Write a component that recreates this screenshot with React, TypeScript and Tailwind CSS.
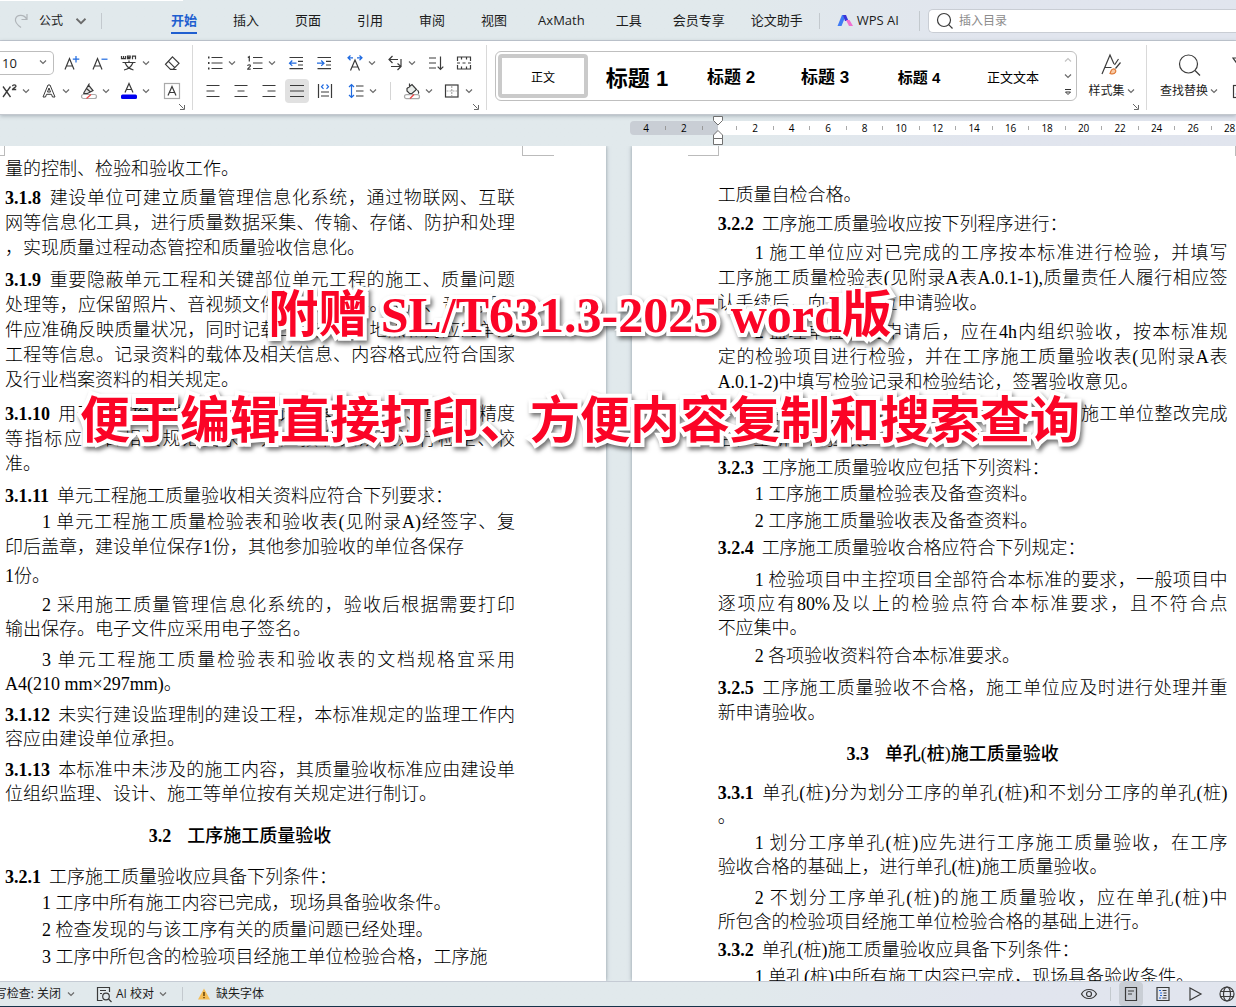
import type { ReactNode } from "react";
import clsx from "clsx";

type Para = {
  gap: string;
  lines: string[];
  no?: string;
  indent?: boolean;
  tight?: boolean;
  heading?: boolean;
};

const leftPage: Para[] = [
  { gap: "mt-px", lines: ["量的控制、检验和验收工作。"] },
  {
    gap: "mt-1",
    no: "3.1.8",
    lines: [
      "建设单位可建立质量管理信息化系统，通过物联网、互联",
      "网等信息化工具，进行质量数据采集、传输、存储、防护和处理",
      "，实现质量过程动态管控和质量验收信息化。",
    ],
  },
  {
    gap: "mt-[7px]",
    no: "3.1.9",
    lines: [
      "重要隐蔽单元工程和关键部位单元工程的施工、质量问题",
      "处理等，应保留照片、音视频文件或相关资料。照片、音视频文",
      "件应准确反映质量状况，同时记载工程部位、地点和对应的单元",
      "工程等信息。记录资料的载体及相关信息、内容格式应符合国家",
      "及行业档案资料的相关规定。",
    ],
  },
  {
    gap: "mt-[9px]",
    no: "3.1.10",
    lines: [
      "用于质量检验的仪器设备、计量器具的性能、量程、精度",
      "等指标应符合相关规范要求，并应按有关规定进行检定、校",
      "准。",
    ],
  },
  { gap: "mt-[7px]", no: "3.1.11", lines: ["单元工程施工质量验收相关资料应符合下列要求："] },
  { gap: "mt-px", indent: true, lines: ["1 单元工程施工质量检验表和验收表(见附录A)经签字、复", ""] },
  { gap: "mt-0", lines: ["印后盖章，建设单位保存1份，其他参加验收的单位各保存"] },
  { gap: "mt-1", lines: ["1份。"] },
  {
    gap: "mt-1",
    indent: true,
    tight: true,
    lines: ["2 采用施工质量管理信息化系统的，验收后根据需要打印", "输出保存。电子文件应采用电子签名。"],
  },
  {
    gap: "mt-[7px]",
    indent: true,
    tight: true,
    lines: ["3 单元工程施工质量检验表和验收表的文档规格宜采用", "A4(210 mm×297mm)。"],
  },
  {
    gap: "mt-[7px]",
    no: "3.1.12",
    tight: true,
    lines: ["未实行建设监理制的建设工程，本标准规定的监理工作内", "容应由建设单位承担。"],
  },
  {
    gap: "mt-[7px]",
    no: "3.1.13",
    tight: true,
    lines: ["本标准中未涉及的施工内容，其质量验收标准应由建设单", "位组织监理、设计、施工等单位按有关规定进行制订。"],
  },
  { gap: "mt-[18px]", no: "3.2", heading: true, lines: ["工序施工质量验收"] },
  { gap: "mt-[16px]", no: "3.2.1", lines: ["工序施工质量验收应具备下列条件："] },
  { gap: "mt-px", indent: true, lines: ["1 工序中所有施工内容已完成，现场具备验收条件。"] },
  { gap: "mt-[2px]", indent: true, lines: ["2 检查发现的与该工序有关的质量问题已经处理。"] },
  { gap: "mt-[2px]", indent: true, lines: ["3 工序中所包含的检验项目经施工单位检验合格，工序施"] },
];

const rightPage: Para[] = [
  { gap: "mt-[27px]", lines: ["工质量自检合格。"] },
  { gap: "mt-1", no: "3.2.2", lines: ["工序施工质量验收应按下列程序进行："] },
  {
    gap: "mt-1",
    indent: true,
    lines: [
      "1 施工单位应对已完成的工序按本标准进行检验，并填写",
      "工序施工质量检验表(见附录A表A.0.1-1),质量责任人履行相应签",
      "认手续后，向监理单位申请验收。",
    ],
  },
  {
    gap: "mt-1",
    indent: true,
    lines: [
      "2 监理单位收到申请后，应在4h内组织验收，按本标准规",
      "定的检验项目进行检验，并在工序施工质量验收表(见附录A表",
      "A.0.1-2)中填写检验记录和检验结论，签署验收意见。",
    ],
  },
  {
    gap: "mt-[7px]",
    indent: true,
    lines: ["3 经检验不合格的工序，监理单位应要求施工单位整改完成", "后，重新申请验收。"],
  },
  { gap: "mt-1", no: "3.2.3", lines: ["工序施工质量验收应包括下列资料："] },
  { gap: "mt-px", indent: true, lines: ["1 工序施工质量检验表及备查资料。"] },
  { gap: "mt-[2px]", indent: true, lines: ["2 工序施工质量验收表及备查资料。"] },
  { gap: "mt-[2px]", no: "3.2.4", lines: ["工序施工质量验收合格应符合下列规定："] },
  {
    gap: "mt-[7px]",
    indent: true,
    tight: true,
    lines: [
      "1 检验项目中主控项目全部符合本标准的要求，一般项目中",
      "逐项应有80%及以上的检验点符合本标准要求，且不符合点",
      "不应集中。",
    ],
  },
  { gap: "mt-1", indent: true, lines: ["2 各项验收资料符合本标准要求。"] },
  { gap: "mt-[7px]", no: "3.2.5", lines: ["工序施工质量验收不合格，施工单位应及时进行处理并重", "新申请验收。"] },
  { gap: "mt-[16px]", no: "3.3", heading: true, lines: ["单孔(桩)施工质量验收"] },
  { gap: "mt-[14px]", no: "3.3.1", tight: true, lines: ["单孔(桩)分为划分工序的单孔(桩)和不划分工序的单孔(桩)", "。"] },
  {
    gap: "mt-[2px]",
    indent: true,
    tight: true,
    lines: ["1 划分工序单孔(桩)应先进行工序施工质量验收，在工序", "验收合格的基础上，进行单孔(桩)施工质量验收。"],
  },
  {
    gap: "mt-[7px]",
    indent: true,
    tight: true,
    lines: ["2 不划分工序单孔(桩)的施工质量验收，应在单孔(桩)中", "所包含的检验项目经施工单位检验合格的基础上进行。"],
  },
  { gap: "mt-1", no: "3.3.2", lines: ["单孔(桩)施工质量验收应具备下列条件："] },
  { gap: "mt-[2px]", indent: true, lines: ["1 单孔(桩)中所有施工内容已完成，现场具备验收条件。"] },
];

function DocText({ paras }: { paras: Para[] }) {
  return (
    <div className="w-[510px] whitespace-nowrap text-lg font-light text-black">
      {paras.map((p, i) => {
        const leading = p.tight ? "leading-6" : "leading-[25px]";
        if (p.heading) {
          return (
            <h2 key={i} className={clsx("pr-10 text-center font-bold", leading, p.gap)}>
              <span className="mr-4">{p.no}</span>
              <span className="font-medium">{p.lines[0]}</span>
            </h2>
          );
        }
        const rows = p.lines.filter(Boolean);
        return (
          <p key={i} className={clsx(leading, p.gap)}>
            {rows.map((line, j) => (
              <span
                key={j}
                className={clsx(
                  "block",
                  j < p.lines.length - 1 && "[text-align-last:justify]",
                  j === 0 && p.indent && "pl-[37px]",
                )}
              >
                {j === 0 && p.no && <b className="mr-2 font-bold">{p.no}</b>}
                {line}
              </span>
            ))}
          </p>
        );
      })}
    </div>
  );
}

function Svg({ children, size = 18 }: { children: ReactNode; size?: number }) {
  return (
    <svg
      width={size}
      height={size}
      viewBox="0 0 18 18"
      fill="none"
      stroke="#3a3a3a"
      strokeWidth="1.2"
      className="shrink-0"
      aria-hidden="true"
    >
      {children}
    </svg>
  );
}

function Chevron({ size = 8 }: { size?: number }) {
  return (
    <svg width={size} height={size} viewBox="0 0 8 8" fill="none" stroke="#6b6b6b" strokeWidth="1.2" className="shrink-0" aria-hidden="true">
      <path d="M1 2.5 4 5.5 7 2.5" />
    </svg>
  );
}

function Launcher() {
  return (
    <button aria-label="更多设置" className="absolute right-[6px] bottom-[3px]">
      <svg width="8" height="8" viewBox="0 0 8 8" fill="none" stroke="#666" aria-hidden="true">
        <path d="M1 1 5.5 5.5M6.5 2v4.5H2" />
      </svg>
    </button>
  );
}

function Tool({ label, w = "w-7", drop, active, children }: { label: string; w?: string; drop?: boolean; active?: boolean; children: ReactNode }) {
  return (
    <button
      aria-label={label}
      title={label}
      className={clsx("flex h-6 shrink-0 items-center", w, drop ? "gap-1" : "justify-center")}
    >
      {active ? (
        <span className="grid size-6 place-items-center rounded bg-[#e1e1e1]">{children}</span>
      ) : (
        children
      )}
      {drop && <Chevron />}
    </button>
  );
}

const blue = "#1f6ae0";

function FontGroup() {
  return (
    <section aria-label="字体" className="relative flex w-[192px] shrink-0 flex-col justify-center gap-1 pb-[2px]">
      <div className="flex items-center">
        <div className="relative">
          <select
            aria-label="字号"
            defaultValue="10"
            className="h-6 w-[54px] appearance-none rounded-r-[5px] border border-l-0 border-[#bdbdbd] bg-white pl-[2px] text-[13px] leading-5"
          >
            <option>10</option>
            <option>12</option>
          </select>
          <span className="pointer-events-none absolute top-2 right-[7px]">
            <Chevron />
          </span>
        </div>
        <div className="ml-1 flex">
          <Tool label="增大字号">
            <Svg>
              <path d="M2 15.5 6.5 4.5 11 15.5M3.5 12h6" />
              <path d="M13 2v6.500M9.800 5.200h6.500" stroke={blue} />
            </Svg>
          </Tool>
          <Tool label="减小字号">
            <Svg>
              <path d="M2 15.500 6.500 4.500 11 15.500M3.500 12h6" />
              <path d="M10.500 5.200h6" stroke={blue} />
            </Svg>
          </Tool>
        </div>
        <div className="ml-[6px] flex">
          <Tool label="拼音指南" w="w-10" drop>
            <Svg>
              <path d="M1.500 2v2.700h4V2M3.500 2v2.500M10.500 4.700H7.500V2.200h2.700v1.300H7.500M12.500 5.200v-3h3v3" />
              <path d="M2.500 8.500h13M9 6.500v2M5 8.500c1.500 4 4.500 6.500 8.500 7.500M13 8.500c-1.500 4-4.500 6.500-9 7.500" />
            </Svg>
          </Tool>
          <Tool label="清除格式" w="w-6">
            <Svg>
              <path d="M9.500 2.800 16 9.300 10 15.300H7.500L2.500 10.300zM5.500 7.300l6 6M7 15.500h6.500" />
            </Svg>
          </Tool>
        </div>
      </div>
      <div className="flex items-center">
        <Tool label="上标" w="w-10" drop>
          <Svg>
            <path d="M3 4.500 10.500 15M10.500 4.500 3 15M12.500 4.300c0-2 3.500-2 3.500 0 0 1.200-3.500 2-3.500 3.200h3.700" strokeWidth="1.300" />
          </Svg>
        </Tool>
        <Tool label="文字效果" w="w-10" drop>
          <Svg>
            <path d="M3 15 8 3h2l5 12h-2.500l-1-2.700h-5L5.500 15zM7.500 10h3L9 6z" strokeWidth="1" />
          </Svg>
        </Tool>
        <Tool label="突出显示" w="w-10" drop>
          <Svg>
            <path d="M4 10.500 8.500 3 13 8.500 7.500 11.500H3.800zM8.500 3l1-1.500M6.500 6.500l4 3.500" fill="#e4e4e4" />
            <rect x="1.500" y="12.500" width="15" height="4" rx="2" stroke="#aaa" fill="#fff" />
            <path d="m6.500 16.500 4.500-4" stroke="#e44" />
          </Svg>
        </Tool>
        <Tool label="字体颜色" w="w-10" drop>
          <Svg>
            <path d="M5 10.500 9 1.500l4 9M6.300 7.500h5.400" />
            <rect x="1" y="12.500" width="16" height="4.500" rx="1.500" fill="#0000f0" stroke="none" />
          </Svg>
        </Tool>
        <Tool label="字符底纹" w="w-6">
          <Svg>
            <rect x="1.500" y="1.500" width="15" height="15" stroke="#aaa" />
            <path d="M5 13.500 9 4.500l4 9M6.300 10.500h5.400" />
          </Svg>
        </Tool>
      </div>
      <Launcher />
    </section>
  );
}

function ParagraphGroup() {
  return (
    <section aria-label="段落" className="relative flex w-[293px] shrink-0 flex-col justify-center gap-1 pb-[2px]">
      <div className="flex items-center pl-[13px]">
        <Tool label="项目符号" w="w-10" drop>
          <Svg>
            <path d="M5.500 3.500h11M5.500 9h11M5.500 14.500h11" />
            <path d="M2 3.500h1.500M2 9h1.500M2 14.500h1.500" strokeWidth="2" />
          </Svg>
        </Tool>
        <Tool label="编号" w="w-9" drop>
          <Svg>
            <path d="M7 3.500h9.500M7 9h9.500M7 14.500h9.500M1.800 3.500 3.300 2.500v5M1.700 12c0-1.700 2.700-1.700 2.700 0 0 1-2.700 1.900-2.700 3.200h3" />
          </Svg>
        </Tool>
        <Tool label="减少缩进">
          <Svg>
            <path d="M2.500 3.500h13.500M11 7.300h5M11 11h5M2.500 14.700h13.500" />
            <path d="M9.500 9.200H2.500M5.300 6.500 2.500 9.200l2.800 2.700" stroke={blue} />
          </Svg>
        </Tool>
        <Tool label="增加缩进">
          <Svg>
            <path d="M2.500 3.500h13.500M11 7.300h5M11 11h5M2.500 14.700h13.500" />
            <path d="M2 9.200h7M6.200 6.500 9 9.200l-2.800 2.700" stroke={blue} />
          </Svg>
        </Tool>
        <div className="ml-2 flex">
          <Tool label="字符缩放" w="w-10" drop>
            <Svg>
              <path d="M4.500 16.500 9 6l4.500 10.500M6 13h6" />
              <path d="M2 3.800h5M4.500 1.500 2 3.800 4.500 6.200M11 3.800h5M13.500 1.500 16 3.800l-2.500 2.400" stroke={blue} />
            </Svg>
          </Tool>
          <Tool label="换行标记" w="w-9" drop>
            <Svg>
              <path d="M6.500 2 3 5.500 6.500 9M3 5.500h9M15 5v7.500H5M11.500 9.500 15 12.500l-3.500 3.500" />
            </Svg>
          </Tool>
          <Tool label="排序">
            <Svg>
              <path d="M2 4h7M2 9h7M2 14h7M13.500 2.500v13M10.700 12.700l2.800 2.800 2.800-2.800" />
            </Svg>
          </Tool>
          <Tool label="显示标记">
            <Svg>
              <path d="M2.500 7V3h13v4M2.500 11v4h13v-4M2 9h3M7.500 9h3M13 9h3M6.500 3v2.500M11.500 3v2.500M6.500 15v-2.500M11.500 15v-2.500" />
            </Svg>
          </Tool>
        </div>
      </div>
      <div className="flex items-center pl-[6px]">
        <Tool label="左对齐">
          <Svg><path d="M2.500 3.500h13M2.500 9h8M2.500 14.500h13" /></Svg>
        </Tool>
        <Tool label="居中对齐">
          <Svg><path d="M2.500 3.500h13M5.500 9h7M2.500 14.500h13" /></Svg>
        </Tool>
        <Tool label="右对齐">
          <Svg><path d="M2.500 3.500h13M7.500 9h8M2.500 14.500h13" /></Svg>
        </Tool>
        <Tool label="两端对齐" active>
          <Svg><path d="M2 3.500h14M2 9h14M2 14.500h14" /></Svg>
        </Tool>
        <Tool label="分散对齐">
          <Svg>
            <path d="M2.500 2v14M15.500 2v14M5 10h8M5 14h8" />
            <path d="M7.500 2.500 5.500 4.700l2 2.200M10.500 2.500l2 2.200-2 2.200" stroke={blue} />
          </Svg>
        </Tool>
        <div className="ml-2 flex items-center">
          <Tool label="行距" w="w-9" drop>
            <Svg>
              <path d="M9 4h7.500M9 9h7.500M9 14h7.500" />
              <path d="M4.500 2.500v13M2 5l2.500-2.500L7 5M2 13l2.500 2.500L7 13" stroke={blue} />
            </Svg>
          </Tool>
          <span className="mr-3 ml-[7px] h-[18px] w-px bg-[#d5d5d5]" />
          <Tool label="底纹颜色" w="w-10" drop>
            <Svg>
              <path d="M4 6.500 9 2.500l4.500 5L9 11.500H6.500L4 9zM6.500 1.500v4" fill="#e8ece9" />
              <path d="M14.500 8c1.500 2 1.500 3 .500 3.500" />
              <rect x="1.500" y="12.700" width="15" height="4" rx="2" stroke="#aaa" fill="#fff" />
              <path d="m7 16.500 4-4" stroke="#e44" />
            </Svg>
          </Tool>
          <Tool label="边框" w="w-8" drop>
            <Svg>
              <rect x="2.500" y="3" width="12.500" height="12" />
              <path d="M8.750 4v10M3.500 9h10.500" stroke="#aaa" strokeDasharray="2 1" />
            </Svg>
          </Tool>
        </div>
      </div>
      <Launcher />
    </section>
  );
}

const styles = [
  { name: "正文", cls: "text-xs" },
  { name: "标题 1", cls: "text-[22px] font-bold" },
  { name: "标题 2", cls: "text-[17px] font-bold" },
  { name: "标题 3", cls: "text-[17px] font-bold" },
  { name: "标题 4", cls: "text-[15px] font-bold" },
  { name: "正文文本", cls: "text-[13px]" },
];

function StyleGallery() {
  return (
    <div className="mt-[10px] ml-2 flex h-[50px] shrink-0 self-start rounded-md border border-[#bfbfbf] bg-white font-['Liberation_Sans','Noto_Sans_CJK_SC',sans-serif]">
      {styles.map((s, i) => (
        <button
          key={s.name}
          className={clsx(
            "m-[2px] w-[90px] rounded pt-1 whitespace-nowrap text-black",
            i === 0 && "border-4 border-[#cacaca]",
            s.cls,
          )}
        >
          {s.name}
        </button>
      ))}
      <div className="flex w-4 flex-col items-center justify-around">
        <button aria-label="向上" className="rotate-180 opacity-40"><Chevron /></button>
        <button aria-label="向下"><Chevron /></button>
        <button aria-label="展开样式">
          <svg width="8" height="8" viewBox="0 0 8 8" fill="none" stroke="#333" aria-hidden="true">
            <path d="M1 1.500h6M1.500 4 4 6.500 6.500 4z" />
          </svg>
        </button>
      </div>
    </div>
  );
}

function Divider() {
  return <span className="my-1 w-px shrink-0 bg-[#d9d9d9]" />;
}

function BigTool({ label, children }: { label: string; children: ReactNode }) {
  return (
    <button className="flex flex-col items-center justify-center gap-[6px] pb-1 text-xs whitespace-nowrap">
      {children}
      <span className="flex items-center gap-[2px]">
        {label}
        <Chevron />
      </span>
    </button>
  );
}

function Ribbon() {
  return (
    <div className="relative z-10 flex h-[74px] shrink-0 overflow-hidden border-b border-[#c3c8ce] bg-white shadow-[0_1px_4px_rgba(60,75,90,0.35)]">
      <FontGroup />
      <Divider />
      <ParagraphGroup />
      <Divider />
      <StyleGallery />
      <div className="relative flex w-[69px] shrink-0 justify-center">
        <BigTool label="样式集">
          <svg width="24" height="24" viewBox="0 0 24 24" fill="none" stroke="#3c3c3c" strokeWidth="1.2" aria-hidden="true">
            <path d="M3 21 11 2l4 9M6 14.500h6.500M21.500 9.500l-5 6M19.500 6l-4 6" />
            <path d="M11 20.500c1-1.500.5-4 3-4.500 2-.3 3.500 1.500 2.500 3.200-1 1.700-3.500 2-5.500 1.300z" stroke="#e07b39" fill="#f8cba6" />
          </svg>
        </BigTool>
        <Launcher />
      </div>
      <Divider />
      <div className="flex w-[84px] shrink-0 justify-center">
        <BigTool label="查找替换">
          <svg width="24" height="24" viewBox="0 0 24 24" fill="none" stroke="#3c3c3c" strokeWidth="1.2" aria-hidden="true">
            <circle cx="11.500" cy="11" r="9" />
            <path d="m18 17.500 5 5" />
          </svg>
        </BigTool>
      </div>
      <div className="flex shrink-0 flex-col justify-center gap-1">
        <Tool label="选择" w="w-5">
          <Svg><path d="M1 3h12L9 14z" /></Svg>
        </Tool>
        <Tool label="图片转文字" w="w-5">
          <Svg>
            <rect x="1.500" y="2.500" width="13" height="12" />
            <path d="M4 11.500 8 5l4 6.500" stroke={blue} />
          </Svg>
        </Tool>
      </div>
    </div>
  );
}

const tabs = ["开始", "插入", "页面", "引用", "审阅", "视图", "AxMath", "工具", "会员专享", "论文助手"];

function TopBar() {
  return (
    <header className="shrink-0 border-b border-[#c5cbd4]">
      <div className="h-px w-[183px] bg-white" />
      <div className="flex h-[39px] items-center">
        <button aria-label="恢复" className="ml-3">
          <Svg>
            <path d="M15 2v5.500H9.500M14.500 7C12.500 2.500 5 1.800 3.500 7c-.8 3.500 2 6 5.500 8.500" stroke="#b0b5b9" />
          </Svg>
        </button>
        <button className="ml-[9px] flex items-center gap-3 text-xs">
          公式 <Chevron size={12} />
        </button>
        <span className="ml-[14px] h-4 w-px bg-[#c3c9ce]" />
        <nav className="ml-[51px] flex h-full">
          {tabs.map((t, i) => (
            <a
              key={t}
              href="#"
              className={clsx(
                "flex items-center pt-[2px] text-[13px] whitespace-nowrap",
                t.length > 2 ? "px-[13px]" : "px-[18px]",
                i === 0 && "font-bold text-[#1f5fd0]",
              )}
            >
              <span className={clsx("border-b-2 py-[2px]", i === 0 ? "border-[#1f5fd0]" : "border-transparent")}>{t}</span>
            </a>
          ))}
        </nav>
        <span className="ml-[3px] h-4 w-px bg-[#c3c9ce]" />
        <a href="#" className="ml-[17px] flex items-center gap-1 text-[13px] whitespace-nowrap">
          <svg width="16" height="14" viewBox="0 0 16 14" aria-hidden="true">
            <path d="M5 1h4L4.500 12H.5z" fill="#3f7bf5" />
            <path d="M6 1h3l2.500 6H8z" fill="#3a35d8" />
            <path d="M9 6h3.500L16 12h-4z" fill="#f06fd0" />
          </svg>
          WPS AI
        </a>
        <span className="ml-5 h-5 w-px bg-[#c3c9ce]" />
        <label className="ml-2 flex h-6 flex-1 items-center gap-[5px] rounded-l-[5px] border border-r-0 border-[#c9cdd4] bg-white pl-[7px]">
          <Svg>
            <circle cx="8" cy="8" r="6.500" />
            <path d="m12.700 12.700 3.800 3.800" />
          </Svg>
          <input aria-label="搜索" placeholder="插入目录" className="w-full min-w-0 text-xs outline-none placeholder:text-[#8c8c8c]" />
        </label>
      </div>
    </header>
  );
}

const marks = [2, 4, 6, 8, 10, 12, 14, 16, 18, 20, 22, 24, 26, 28];

function Ruler() {
  return (
    <div className="flex h-[31px] shrink-0 items-start pt-[6px] pl-[51%] text-[10px] leading-[14px] text-black">
      <div className="flex h-[14px] w-[88px] shrink-0 items-center justify-between rounded-l bg-[#c9ced5] pr-[15px] pl-[13px]">
        <span>4</span>
        <i className="h-1 w-px bg-[#999]" />
        <span>2</span>
        <i className="h-1 w-px bg-[#999]" />
      </div>
      <div className="relative flex h-[14px] flex-1 bg-white pl-[18px]">
        <div className="flex w-[511px] shrink-0">
          {marks.map((m) => (
            <span key={m} className="flex flex-1 items-center">
              <i className="h-1 w-px bg-[#aaa]" />
              <span className="flex-1 text-center">{m}</span>
            </span>
          ))}
        </div>
        <svg width="12" height="32" viewBox="0 0 12 32" fill="#fff" stroke="#707070" className="absolute -top-[6px] -left-[6px] z-20" aria-hidden="true">
          <path d="M1.500 1.500h9v4L6 10 1.500 5.500zM6 15.500l4.500 4.500v3.500h-9V20zM1.500 23.500h9v6h-9z" />
        </svg>
        <svg width="12" height="12" viewBox="0 0 12 12" fill="#fff" stroke="#707070" className="absolute top-2 -right-2" aria-hidden="true">
          <path d="M6 1.500 10.500 6v4.500h-9V6z" />
        </svg>
      </div>
    </div>
  );
}

function Pages() {
  return (
    <main className="flex min-h-0 flex-1 gap-[26px] overflow-hidden font-['Liberation_Serif','Noto_Sans_CJK_SC',serif]">
      <article className="w-[49%] shrink-0 bg-white shadow-[0_0_4px_rgba(80,95,110,0.6)]">
        <div className="flex h-[10px]">
          <i className="w-[5px] border-r border-b border-[#bbb]" />
          <i className="ml-[517px] w-8 border-b border-l border-[#bbb]" />
        </div>
        <div className="pl-[5px]">
          <DocText paras={leftPage} />
        </div>
      </article>
      <article className="min-w-0 flex-1 bg-white shadow-[0_0_4px_rgba(80,95,110,0.6)]">
        <div className="flex h-[10px] justify-between">
          <i className="ml-14 w-[31px] border-r border-b border-[#bbb]" />
          <i className="w-px bg-[#bbb]" />
        </div>
        <div className="pl-[86px]">
          <DocText paras={rightPage} />
        </div>
      </article>
    </main>
  );
}

function Banner() {
  return (
    <div className="pointer-events-none absolute inset-x-0 top-[285px] z-30 flex flex-col gap-[46px] pr-[76px] text-center font-['Liberation_Serif','Noto_Sans_CJK_SC',serif] text-[50px] leading-[60px] font-bold whitespace-nowrap text-[#fb0426] [paint-order:stroke_fill] drop-shadow-[2px_3px_2px_rgba(0,0,0,0.55)] [-webkit-text-stroke:8px_#fff]">
      <p>附赠 SL/T631.3-2025 word版</p>
      <p>便于编辑直接打印、方便内容复制和搜索查询</p>
    </div>
  );
}

function StatusBar() {
  return (
    <footer className="flex h-[26px] shrink-0 items-center justify-between overflow-hidden border-t border-b border-t-[#c5cbd4] border-b-[#17344b] text-xs whitespace-nowrap">
      <div className="flex items-center">
        <button className="flex items-center gap-[6px]">
          <span className="flex w-[61px] justify-end overflow-hidden">拼写检查: 关闭</span>
          <Chevron />
        </button>
        <button className="ml-5 flex items-center gap-[3px]">
          <Svg>
            <path d="M14.500 7V2.500h-12v13h5M5 5.500h6M5 8.500h2" />
            <circle cx="11" cy="11.500" r="3.300" />
            <path d="m13.500 14 3 3" />
          </Svg>
          <span className="mr-[2px]">AI 校对</span>
          <Chevron />
        </button>
        <span className="mx-[15px] h-[14px] w-px bg-[#c3c9ce]" />
        <button className="flex items-center gap-[6px]">
          <svg width="12" height="12" viewBox="0 0 12 12" aria-hidden="true">
            <path d="M6 .5 12 11.500H0z" fill="#f5bd55" />
            <path d="M6 4v4M6 9v1.300" stroke="#5b3a00" strokeWidth="1.400" />
          </svg>
          缺失字体
        </button>
      </div>
      <div className="flex items-center">
        <button aria-label="护眼模式">
          <Svg>
            <path d="M1.500 9C4.500 3 13.500 3 16.500 9c-3 6-12 6-15 0z" />
            <circle cx="9" cy="9" r="2.500" />
          </Svg>
        </button>
        <span className="mr-2 ml-3 h-[14px] w-px bg-[#c3c9ce]" />
        <button aria-label="页面视图" className="grid size-6 place-items-center rounded bg-[#c9ced5]">
          <Svg><path d="M3.500 2.500h11v13h-11zM6 6h6M6 9h4" /></Svg>
        </button>
        <button aria-label="大纲" className="ml-[11px]">
          <Svg>
            <path d="M3 2.500h12v13H3zM8.500 5.500h4M9.500 8h3M9.500 10.500h3M8.500 13h4" />
            <path d="M5 5.500h2M6 8h2M6 10.500h2M5 13h2" stroke={blue} />
          </Svg>
        </button>
        <button aria-label="阅读" className="ml-[14px]">
          <Svg><path d="M4 3v12l11-6z" /></Svg>
        </button>
        <button aria-label="网页视图" className="ml-[14px]">
          <Svg>
            <circle cx="9" cy="9" r="7" />
            <ellipse cx="9" cy="9" rx="3.500" ry="7" />
            <path d="M2.500 6.500h13M2.500 11.500h13" />
          </Svg>
        </button>
      </div>
    </footer>
  );
}

export default function App() {
  return (
    <div className="relative flex h-screen flex-col overflow-hidden bg-linear-to-r from-[#e1e9ec] from-60% to-[#e1e5ee] to-80% font-['Open_Sans','Noto_Sans_CJK_SC',sans-serif] text-[#1c1c1c]">
      <TopBar />
      <Ribbon />
      <Ruler />
      <Pages />
      <StatusBar />
      <Banner />
    </div>
  );
}
